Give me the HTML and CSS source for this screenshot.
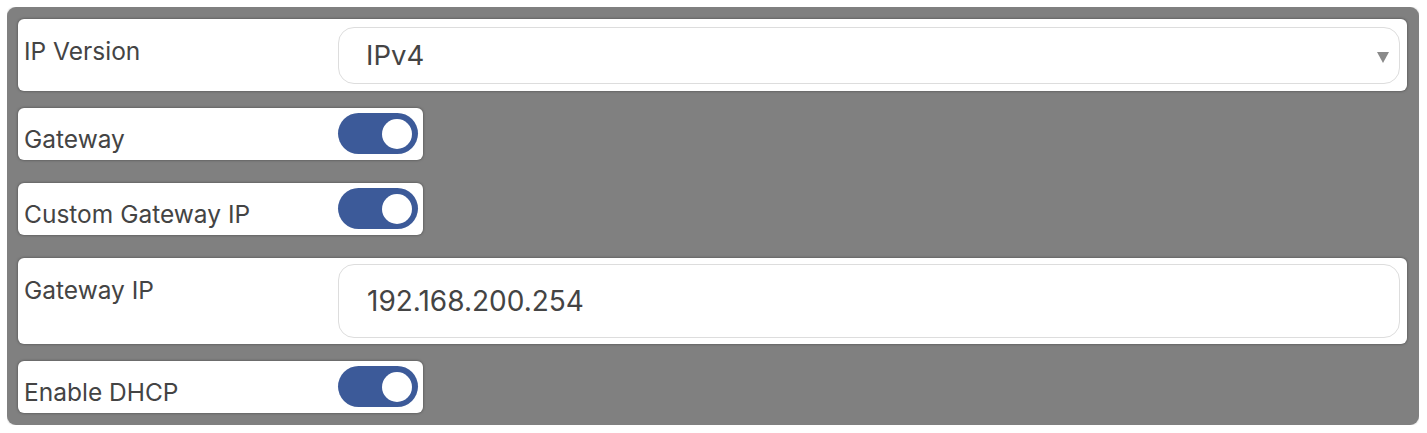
FILE: index.html
```html
<!DOCTYPE html>
<html lang="en">
<head>
<meta charset="utf-8">
<title>Network Settings</title>
<link rel="stylesheet" href="styles.css">
</head>
<body>
<div class="panel">
  <div class="row row-full">
    <div class="label">IP Version</div>
    <div class="select">
      <span class="select-value">IPv4</span>
      <span class="caret"></span>
    </div>
  </div>
  <div class="row row-toggle spaced">
    <div class="label">Gateway</div>
    <div class="toggle"><span class="knob"></span></div>
  </div>
  <div class="row row-toggle spaced">
    <div class="label">Custom Gateway IP</div>
    <div class="toggle"><span class="knob"></span></div>
  </div>
  <div class="row row-full">
    <div class="label">Gateway IP</div>
    <div class="input">192.168.200.254</div>
  </div>
  <div class="row row-toggle">
    <div class="label">Enable DHCP</div>
    <div class="toggle"><span class="knob"></span></div>
  </div>
</div>
</body>
</html>
```

FILE: styles.css
```css
html, body {
  background: #ffffff;
}
body {
  margin: 7px 8px 0 7px;
  font-family: Inter, "Noto Sans", "Liberation Sans", sans-serif;
  color: #444444;
}
.panel {
  background: #808080;
  border-radius: 9px;
  box-shadow: 0 0 2px rgba(0, 0, 0, 0.35);
  padding: 12px 12px 12px 11px;
  display: flex;
  flex-direction: column;
  align-items: flex-start;
  gap: 17px;
}
.row {
  background: #ffffff;
  border-radius: 6px;
  box-shadow: 0 0 3px rgba(0, 0, 0, 0.45);
  display: flex;
  align-items: flex-start;
  padding: 6px 6px 6px 6px;
  box-sizing: border-box;
}
.row-full {
  align-self: stretch;
  padding-right: 7px;
}
.row-toggle {
  padding: 5px 5px 6px 6px;
}
.spaced {
  margin-bottom: 6px;
}
.label {
  flex: 0 0 314px;
  font-size: 24.5px;
  line-height: 29px;
  padding-top: 12px;
  color: #444444;
  white-space: nowrap;
}
.select {
  flex: 1;
  height: 57px;
  margin: 2px 0 1px 0;
  box-sizing: border-box;
  border: 1px solid #dddddd;
  border-radius: 16px;
  display: flex;
  align-items: center;
  justify-content: space-between;
  padding: 0 10px 0 27px;
}
.select-value {
  font-size: 27.5px;
  color: #444444;
  padding-bottom: 1px;
}
.caret {
  width: 0;
  height: 0;
  border-left: 6.5px solid transparent;
  border-right: 6.5px solid transparent;
  border-top: 11px solid #8a8a8a;
  margin-top: 3px;
}
.input {
  flex: 1;
  height: 74px;
  box-sizing: border-box;
  border: 1px solid #dddddd;
  border-radius: 16px;
  display: flex;
  align-items: center;
  padding: 0 0 0 28px;
  font-size: 28px;
  color: #444444;
}
.toggle {
  width: 80px;
  height: 41px;
  border-radius: 21px;
  background: #3c5a99;
  display: flex;
  align-items: center;
  justify-content: flex-end;
  padding-right: 6px;
  box-sizing: border-box;
}
.knob {
  width: 30px;
  height: 30px;
  border-radius: 50%;
  background: #ffffff;
}
```
